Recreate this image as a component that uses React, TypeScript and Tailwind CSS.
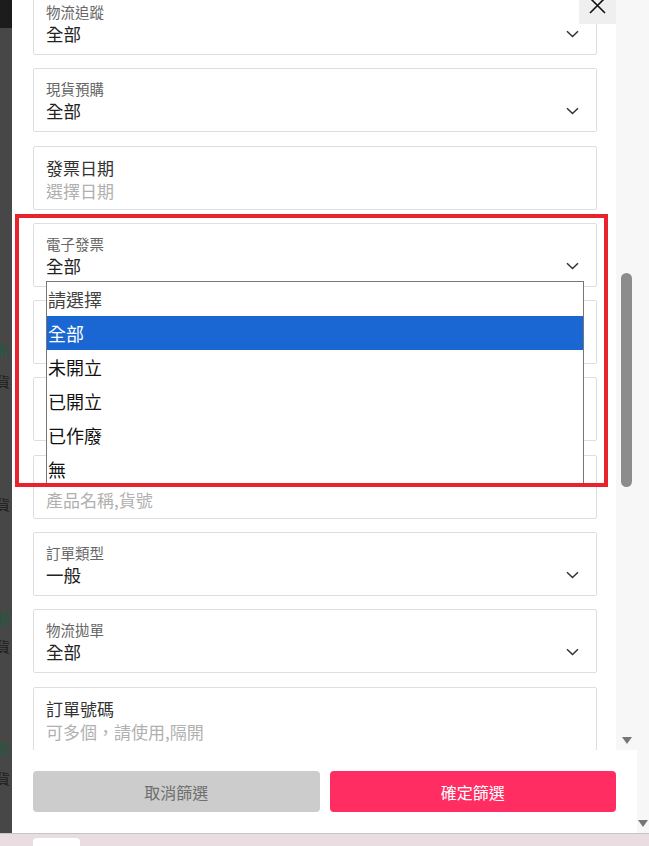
import React from "react";

type Field = {
  label: string;
  value?: string;
  placeholder?: string;
  strong?: boolean;
  select?: boolean;
};

// fields 5-7 sit under the open select popup, so their labels are not shown
const fields: Field[] = [
  { label: "物流追蹤", value: "全部", select: true },
  { label: "現貨預購", value: "全部", select: true },
  { label: "發票日期", placeholder: "選擇日期", strong: true },
  { label: "電子發票", value: "全部", select: true },
  { label: "", select: true },
  { label: "", select: true },
  { label: "", placeholder: "產品名稱,貨號", strong: true },
  { label: "訂單類型", value: "一般", select: true },
  { label: "物流拋單", value: "全部", select: true },
  { label: "訂單號碼", placeholder: "可多個，請使用,隔開", strong: true },
];

const options = ["請選擇", "全部", "未開立", "已開立", "已作廢", "無"];

const Chevron = () => (
  <svg width="13" height="8" viewBox="0 0 13 8" fill="none">
    <path d="M1 1.2l5.5 5.3 5.5-5.3" stroke="#333" strokeWidth="1.5" />
  </svg>
);

const FieldBox = ({ f }: { f: Field }) => (
  <div className="h-[64px] shrink-0 rounded-[2px] border border-[#dedede] bg-white pl-[12px] pr-[17px] pt-[10px]">
    {f.strong ? (
      <div className="h-[21px] text-[17px] leading-[21px] text-[#333]">{f.label}</div>
    ) : (
      <div className="h-[19px] text-[14.5px] leading-[19px] text-[#666]">{f.label}</div>
    )}
    <div className={f.strong ? "mt-[1px] flex h-[24px] items-center justify-between" : "mt-[1px] flex h-[24px] items-center justify-between"}>
      {f.value ? (
        <span className="text-[17.5px] leading-[24px] text-[#222]">{f.value}</span>
      ) : (
        <span className="text-[17px] leading-[24px] text-[#b0b0b0]">{f.placeholder}</span>
      )}
      {f.select && <Chevron />}
    </div>
  </div>
);

const Arrow = () => (
  <svg width="10" height="7" viewBox="0 0 10 7">
    <path d="M0 0h10L5 7z" fill="#777" />
  </svg>
);

export default function App() {
  return (
    <div
      className="relative flex h-[846px] w-[649px] flex-col overflow-hidden bg-[#f7f7f7]"
      style={{ fontFamily: '"Noto Sans CJK TC", "Noto Sans", sans-serif' }}
    >
      <div className="flex h-[833px]">
        {/* dimmed page behind the drawer */}
        <div className="flex w-[12px] shrink-0 flex-col overflow-hidden bg-[#474747] text-[14px] leading-[16px]">
          <div className="h-[28px] shrink-0 bg-[#1c1c1c]" />
          <div className="-ml-[4px] mt-[314px] text-[#1f5c3d]">本</div>
          <div className="-ml-[4px] mt-[15px] text-[#1e1e1e]">貨</div>
          <div className="-ml-[4px] mt-[107px] text-[#1e1e1e]">貨</div>
          <div className="-ml-[4px] mt-[98px] text-[#1f5c3d]">超</div>
          <div className="-ml-[4px] mt-[12px] text-[#1e1e1e]">貨</div>
          <div className="-ml-[4px] mt-[86px] text-[#1f5c3d]">本</div>
          <div className="-ml-[4px] mt-[14px] text-[#1e1e1e]">貨</div>
        </div>

        <div className="flex w-[625px] shrink-0 flex-col bg-white">
          <div className="flex h-[750px] shrink-0">
            <div className="relative w-[604px] overflow-hidden pl-[21px] pr-[19px]">
              <div className="-mt-[9px] flex flex-col gap-[13.3px]">
                {fields.map((f, i) => (
                  <FieldBox key={i} f={f} />
                ))}
              </div>
              <button className="absolute -top-[13px] right-0 flex h-[37px] w-[37px] items-center justify-center bg-[#efefef]">
                <svg width="17" height="17" viewBox="0 0 17 17">
                  <path d="M1 1l15 15M16 1L1 16" stroke="#111" strokeWidth="1.6" />
                </svg>
              </button>
            </div>
            <div className="flex w-[21px] shrink-0 flex-col items-center bg-[#f7f7f7]">
              <div className="mt-[273px] h-[214px] w-[11px] rounded-full bg-[#8c8c8c]" />
              <div className="mt-[250px]">
                <Arrow />
              </div>
            </div>
          </div>
          <div className="flex gap-[10px] px-[21px] pt-[21px]">
            <button className="h-[41px] flex-1 rounded-[4px] bg-[#cccccc] text-[16px] text-[#6f6f6f]">取消篩選</button>
            <button className="h-[41px] flex-1 rounded-[4px] bg-[#ff2d62] text-[16px] text-white">確定篩選</button>
          </div>
        </div>

        <div className="flex w-[12px] shrink-0 flex-col items-center justify-end bg-[#f7f7f7] pb-[6px]">
          <Arrow />
        </div>
      </div>

      <div className="flex h-[13px] border-t border-[#c4c4c4] bg-[#e9dde1] pl-[33px] pt-[4px]">
        <div className="h-[10px] w-[47px] rounded-t-[4px] bg-white" />
      </div>

      {/* native select popup */}
      <div className="absolute left-[46px] top-[281px] h-[204px] w-[538px] overflow-hidden border border-[#767676] bg-white">
        {options.map((o, i) => (
          <div
            key={o}
            className={
              i === 1
                ? "flex h-[34px] items-center bg-[#1a66d2] pl-[1px] text-[18px] text-white"
                : i === 0
                ? "flex h-[34px] items-center pl-[1px] text-[18px] text-[#444]"
                : "flex h-[34px] items-center pl-[1px] text-[18px] text-[#111]"
            }
          >
            {o}
          </div>
        ))}
      </div>

      {/* highlight frame */}
      <div className="pointer-events-none absolute left-[15px] top-[214px] h-[273px] w-[593px] border-[4px] border-[#e8232b]" />
    </div>
  );
}
